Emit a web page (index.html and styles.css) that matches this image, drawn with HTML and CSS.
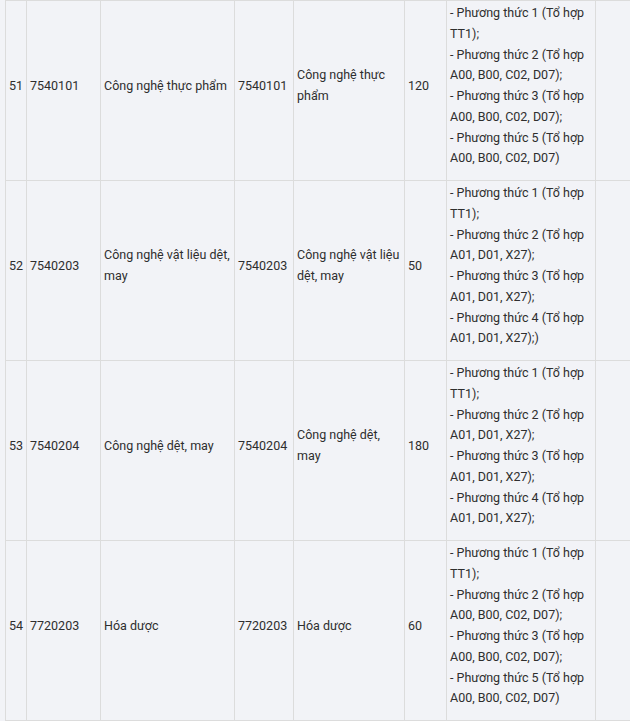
FILE: index.html
```html
<!DOCTYPE html>
<html lang="vi">
<head>
    <meta charset="UTF-8">
    <meta name="viewport" content="width=device-width, initial-scale=1.0">
    <title>Danh sách ngành tuyển sinh</title>
    <link rel="stylesheet" href="styles.css">
</head>
<body>
    <div class="table-wrap">
        <table class="major-table">
            <colgroup>
                <col class="col-stt">
                <col class="col-code">
                <col class="col-name">
                <col class="col-code2">
                <col class="col-name2">
                <col class="col-quota">
                <col class="col-method">
                <col class="col-note">
            </colgroup>
            <tbody>
                <tr>
                    <td>51</td>
                    <td>7540101</td>
                    <td>Công nghệ thực phẩm</td>
                    <td>7540101</td>
                    <td>Công nghệ thực phẩm</td>
                    <td>120</td>
                    <td>- Phương thức 1 (Tổ hợp TT1);<br>- Phương thức 2 (Tổ hợp A00, B00, C02, D07);<br>- Phương thức 3 (Tổ hợp A00, B00, C02, D07);<br>- Phương thức 5 (Tổ hợp A00, B00, C02, D07)</td>
                    <td></td>
                </tr>
                <tr>
                    <td>52</td>
                    <td>7540203</td>
                    <td>Công nghệ vật liệu dệt, may</td>
                    <td>7540203</td>
                    <td>Công nghệ vật liệu dệt, may</td>
                    <td>50</td>
                    <td>- Phương thức 1 (Tổ hợp TT1);<br>- Phương thức 2 (Tổ hợp A01, D01, X27);<br>- Phương thức 3 (Tổ hợp A01, D01, X27);<br>- Phương thức 4 (Tổ hợp A01, D01, X27);)</td>
                    <td></td>
                </tr>
                <tr>
                    <td>53</td>
                    <td>7540204</td>
                    <td>Công nghệ dệt, may</td>
                    <td>7540204</td>
                    <td>Công nghệ dệt, may</td>
                    <td>180</td>
                    <td>- Phương thức 1 (Tổ hợp TT1);<br>- Phương thức 2 (Tổ hợp A01, D01, X27);<br>- Phương thức 3 (Tổ hợp A01, D01, X27);<br>- Phương thức 4 (Tổ hợp A01, D01, X27);</td>
                    <td></td>
                </tr>
                <tr>
                    <td>54</td>
                    <td>7720203</td>
                    <td>Hóa dược</td>
                    <td>7720203</td>
                    <td>Hóa dược</td>
                    <td>60</td>
                    <td>- Phương thức 1 (Tổ hợp TT1);<br>- Phương thức 2 (Tổ hợp A00, B00, C02, D07);<br>- Phương thức 3 (Tổ hợp A00, B00, C02, D07);<br>- Phương thức 5 (Tổ hợp A00, B00, C02, D07)</td>
                    <td></td>
                </tr>
            </tbody>
        </table>
    </div>
</body>
</html>
```

FILE: styles.css
```css
* {
    margin: 0;
    padding: 0;
    box-sizing: border-box;
}

body {
    font-family: 'Roboto', 'Noto Sans', sans-serif;
    font-size: 12.5px;
    color: #2e2e2e;
    background: #f2f3f7;
    overflow: hidden;
}

.table-wrap {
    padding-left: 5px;
}

/* Bảng ngành */
.major-table {
    border-collapse: collapse;
    table-layout: fixed;
    width: 650px;
    background: #f2f3f7;
}

.major-table td {
    border: 1px solid #dcdcdc;
    padding: 2px 2px 11px 3px;
    line-height: 20.75px;
    vertical-align: middle;
}

.col-stt { width: 21px; }
.col-code { width: 74px; }
.col-name { width: 134px; }
.col-code2 { width: 59px; }
.col-name2 { width: 111px; }
.col-quota { width: 42px; }
.col-method { width: 149px; }
.col-note { width: 60px; }
```
